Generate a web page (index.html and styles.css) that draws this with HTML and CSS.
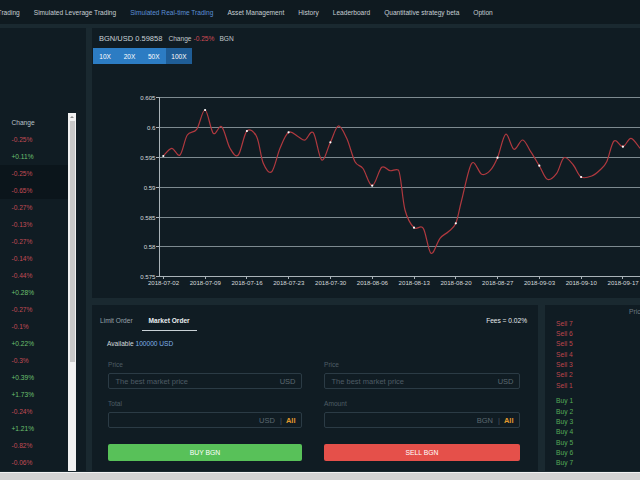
FILE: index.html
```html
<!DOCTYPE html>
<html lang="en">
<head>
<meta charset="utf-8">
<title>Simulated Real-time Trading</title>
<link rel="stylesheet" href="styles.css">
</head>
<body>
<nav class="topnav">
  <span class="nav-item first">Trading</span>
  <span class="nav-item">Simulated Leverage Trading</span>
  <span class="nav-item active">Simulated Real-time Trading</span>
  <span class="nav-item">Asset Management</span>
  <span class="nav-item">History</span>
  <span class="nav-item">Leaderboard</span>
  <span class="nav-item">Quantitative strategy beta</span>
  <span class="nav-item">Option</span>
</nav>
<div class="main">
  <aside class="market">
    <div class="market-list">
      <div class="market-head">Change</div>
      <div class="mrow down">-0.25%</div>
      <div class="mrow up">+0.11%</div>
      <div class="mrow down hl">-0.25%</div>
      <div class="mrow down hl">-0.65%</div>
      <div class="mrow down">-0.27%</div>
      <div class="mrow down">-0.13%</div>
      <div class="mrow down">-0.27%</div>
      <div class="mrow down">-0.14%</div>
      <div class="mrow down">-0.44%</div>
      <div class="mrow up">+0.28%</div>
      <div class="mrow down">-0.27%</div>
      <div class="mrow down">-0.1%</div>
      <div class="mrow up">+0.22%</div>
      <div class="mrow down">-0.3%</div>
      <div class="mrow up">+0.39%</div>
      <div class="mrow up">+1.73%</div>
      <div class="mrow down">-0.24%</div>
      <div class="mrow up">+1.21%</div>
      <div class="mrow down">-0.82%</div>
      <div class="mrow down">-0.06%</div>
    </div>
    <div class="vscroll">
      <div class="vs-arrow"></div>
      <div class="vs-thumb"></div>
    </div>
  </aside>
  <div class="workspace">
    <section class="chart-panel">
      <div class="chart-head">
        <span class="pair">BGN/USD 0.59858</span>
        <span class="ch-label">Change</span>
        <span class="ch-value">-0.25%</span>
        <span class="ch-unit">BGN</span>
      </div>
      <div class="lev-group">
        <span class="lev">10X</span>
        <span class="lev">20X</span>
        <span class="lev">50X</span>
        <span class="lev active">100X</span>
      </div>
      <svg class="chart" width="548" height="226" viewBox="92 70 548 226" xmlns="http://www.w3.org/2000/svg">
        <g stroke="#7d8a90" stroke-width="1">
          <line x1="159" y1="97.5" x2="640" y2="97.5"/>
          <line x1="159" y1="127.5" x2="640" y2="127.5"/>
          <line x1="159" y1="157.5" x2="640" y2="157.5"/>
          <line x1="159" y1="187.5" x2="640" y2="187.5"/>
          <line x1="159" y1="217.5" x2="640" y2="217.5"/>
          <line x1="159" y1="246.5" x2="640" y2="246.5"/>
        </g>
        <g stroke="#aab3b8" stroke-width="1">
          <line x1="159.5" y1="97" x2="159.5" y2="277"/>
          <line x1="159" y1="276.5" x2="640" y2="276.5"/>
          <line x1="156" y1="97.5" x2="159" y2="97.5"/>
          <line x1="156" y1="127.5" x2="159" y2="127.5"/>
          <line x1="156" y1="157.5" x2="159" y2="157.5"/>
          <line x1="156" y1="187.5" x2="159" y2="187.5"/>
          <line x1="156" y1="217.5" x2="159" y2="217.5"/>
          <line x1="156" y1="246.5" x2="159" y2="246.5"/>
          <line x1="156" y1="276.5" x2="159" y2="276.5"/>
          <line x1="163.5" y1="276" x2="163.5" y2="279"/>
          <line x1="205.5" y1="276" x2="205.5" y2="279"/>
          <line x1="246.5" y1="276" x2="246.5" y2="279"/>
          <line x1="288.5" y1="276" x2="288.5" y2="279"/>
          <line x1="330.5" y1="276" x2="330.5" y2="279"/>
          <line x1="372.5" y1="276" x2="372.5" y2="279"/>
          <line x1="414.5" y1="276" x2="414.5" y2="279"/>
          <line x1="455.5" y1="276" x2="455.5" y2="279"/>
          <line x1="497.5" y1="276" x2="497.5" y2="279"/>
          <line x1="539.5" y1="276" x2="539.5" y2="279"/>
          <line x1="581.5" y1="276" x2="581.5" y2="279"/>
          <line x1="622.5" y1="276" x2="622.5" y2="279"/>
        </g>
        <g class="ylab" text-anchor="end">
          <text x="155.5" y="99.5">0.605</text>
          <text x="155.5" y="129.5">0.6</text>
          <text x="155.5" y="159.5">0.595</text>
          <text x="155.5" y="189.5">0.59</text>
          <text x="155.5" y="219.5">0.585</text>
          <text x="155.5" y="248.8">0.58</text>
          <text x="155.5" y="278.5">0.575</text>
        </g>
        <g class="xlab" text-anchor="middle">
          <text x="163.5" y="285">2018-07-02</text>
          <text x="205.3" y="285">2018-07-09</text>
          <text x="247" y="285">2018-07-16</text>
          <text x="288.8" y="285">2018-07-23</text>
          <text x="330.6" y="285">2018-07-30</text>
          <text x="372.4" y="285">2018-08-06</text>
          <text x="414.2" y="285">2018-08-13</text>
          <text x="456" y="285">2018-08-20</text>
          <text x="497.7" y="285">2018-08-27</text>
          <text x="539.5" y="285">2018-09-03</text>
          <text x="581.3" y="285">2018-09-10</text>
          <text x="623.1" y="285">2018-09-17</text>
        </g>
        <path fill="none" stroke="#b0393f" stroke-width="1.2" stroke-linejoin="round"
          d="M163.3,156 C164.7,154.7 168.9,148.5 171.7,148.3
             S177.4,157.2 180,155 S184.5,139.3 187.3,135 S193.7,133.5 196.7,129.3
             S202.3,109.3 205.1,110 S210.5,130.5 213.3,133.3 S218.9,124.2 221.7,126.7
             S227.2,143.6 230,148.3 S235.5,157.9 238.3,155 S243.8,134.1 246.9,131
             S254,131.3 256.7,136.7 S260.8,157.5 263.3,163.3 S268.9,174.2 271.7,171.7
             S277.2,154.9 280,148.3 S285.6,134.2 288.6,132.3 S295.6,135.4 298.3,136.7
             S302.5,140.7 305,140 S310.5,129.4 313.3,132.7 S318.9,158.4 321.7,160
             S327.6,148 330.4,142.3 S335.6,126.7 338.3,126 S343.9,132.4 346.7,138.3
             S352.3,156.7 355,161.7 S360.1,164.5 363,168.5 S369.1,185.9 372.2,185.7
             S378.7,169.8 381.7,167.3 S387.2,170.3 390,170.7 S395.8,168.5 398.3,170
             S402.4,200.4 405,210 S411,224.7 414,227.7 S420.5,224 423.3,228.3
             S428.2,251.6 431,253.3 S437.1,241.9 440,238.3 S445.7,234.2 448.3,231.7
             S453.6,228.6 455.8,223.3 S459,210 461.7,200 S468.4,167.6 471.7,163.3
             S478.6,173.1 481.7,174.3 S487.4,173.5 490,170.7 S494.9,163.8 497.5,157.7
             S503,135.7 505.7,134.3 S511.2,148.4 514,149.3 S519.9,139.6 522.7,140
             S527.9,147.4 530.7,151.7 S536.5,161.1 539.3,165.7 S544.4,178 547.3,179.3
             S553.9,176.9 556.7,173.3 S561.2,159.1 564,157.7 S570.5,161.8 573.3,165
             S578,175.2 581.1,177 S588.6,177.2 591.7,176 S597.5,172.4 600,170
             S604.4,166.5 606.7,161.7 S611.3,143.5 614,141 S620.1,147.2 622.9,146.7
             S628.2,138 631,138.3 S638.5,146.6 640,148.3"/>
        <g fill="#ffffff">
          <circle cx="163.3" cy="156" r="1.1"/>
          <circle cx="205.1" cy="110" r="1.1"/>
          <circle cx="246.9" cy="131" r="1.1"/>
          <circle cx="288.6" cy="132.3" r="1.1"/>
          <circle cx="330.4" cy="142.3" r="1.1"/>
          <circle cx="372.2" cy="185.7" r="1.1"/>
          <circle cx="414" cy="227.7" r="1.1"/>
          <circle cx="455.8" cy="223.3" r="1.1"/>
          <circle cx="497.5" cy="157.7" r="1.1"/>
          <circle cx="539.3" cy="165.7" r="1.1"/>
          <circle cx="581.1" cy="177" r="1.1"/>
          <circle cx="622.9" cy="146.7" r="1.1"/>
        </g>
      </svg>
    </section>
    <div class="bottom-row">
      <section class="order-panel">
        <div class="order-tabs">
          <span class="tab">Limit Order</span>
          <span class="tab active">Market Order</span>
          <span class="fees">Fees = 0.02%</span>
        </div>
        <div class="avail">Available <span class="avail-val">100000 USD</span></div>
        <div class="order-form">
          <div class="order-col">
            <div class="f-label">Price</div>
            <div class="f-input"><span class="ph">The best market price</span><span class="unit">USD</span></div>
            <div class="f-label second">Total</div>
            <div class="f-input"><span class="ph"></span><span class="unit">USD</span><span class="sep">|</span><span class="all">All</span></div>
            <div class="btn buy">BUY BGN</div>
          </div>
          <div class="order-col">
            <div class="f-label">Price</div>
            <div class="f-input"><span class="ph">The best market price</span><span class="unit">USD</span></div>
            <div class="f-label second">Amount</div>
            <div class="f-input"><span class="ph"></span><span class="unit">BGN</span><span class="sep">|</span><span class="all">All</span></div>
            <div class="btn sell">SELL BGN</div>
          </div>
        </div>
      </section>
      <section class="book-panel">
        <div class="book-head">Price</div>
        <div class="book-group sells">
          <div class="brow">Sell 7</div>
          <div class="brow">Sell 6</div>
          <div class="brow">Sell 5</div>
          <div class="brow">Sell 4</div>
          <div class="brow">Sell 3</div>
          <div class="brow">Sell 2</div>
          <div class="brow">Sell 1</div>
        </div>
        <div class="book-group buys">
          <div class="brow">Buy 1</div>
          <div class="brow">Buy 2</div>
          <div class="brow">Buy 3</div>
          <div class="brow">Buy 4</div>
          <div class="brow">Buy 5</div>
          <div class="brow">Buy 6</div>
          <div class="brow">Buy 7</div>
        </div>
      </section>
    </div>
  </div>
</div>
<div class="hscroll"></div>
</body>
</html>
```

FILE: styles.css
```css
html, body {
  margin: 0;
  padding: 0;
  width: 640px;
  height: 480px;
  overflow: hidden;
}

body {
  background: #1a2930;
  font-family: "Liberation Sans", Arial, sans-serif;
  color: #c9d1d6;
}

/* top navigation */
.topnav {
  height: 24px;
  background: #0f1a20;
  display: flex;
  align-items: center;
  gap: 14px;
  font-size: 6.6px;
  white-space: nowrap;
  overflow: hidden;
}

.nav-item {
  color: #c6ced3;
}

.nav-item.first {
  margin-left: -2.4px;
}

.nav-item.active {
  color: #5b8fd6;
}

/* main area */
.main {
  margin-top: 4px;
  height: 443px;
  display: grid;
  grid-template-columns: 86px 548px;
  column-gap: 6px;
}

/* left market list */
.market {
  background: #101c23;
  display: flex;
  overflow: hidden;
}

.market-list {
  width: 68px;
  padding-top: 86px;
  font-size: 6.6px;
}

.market-head {
  height: 17px;
  line-height: 17px;
  padding-left: 11.5px;
  color: #b8c3ca;
}

.mrow {
  height: 17px;
  line-height: 17px;
  padding-left: 11.5px;
}

.mrow.hl {
  background: #0b151b;
}

.down {
  color: #c24b55;
}

.up {
  color: #6cc070;
}

.vscroll {
  width: 8px;
  margin-top: 85px;
  background: #f1f1f1;
  display: flex;
  flex-direction: column;
  align-items: center;
}

.vs-arrow {
  width: 0;
  height: 0;
  margin-top: 3px;
  border-left: 2px solid transparent;
  border-right: 2px solid transparent;
  border-bottom: 2px solid #8a8a8a;
}

.vs-thumb {
  width: 5px;
  height: 241px;
  margin-top: 3px;
  background: #c8c8c8;
}

/* workspace */
.workspace {
  display: grid;
  grid-template-rows: 270px 166px;
  row-gap: 7px;
}

.chart-panel {
  background: #101c23;
  overflow: hidden;
}

.chart-head {
  height: 20px;
  display: flex;
  align-items: center;
  padding-left: 7px;
  white-space: nowrap;
}

.pair {
  font-size: 7.5px;
  color: #c9d1d6;
}

.ch-label {
  font-size: 6.6px;
  margin-left: 6px;
  color: #c0c8cd;
}

.ch-value {
  font-size: 6.6px;
  margin-left: 2px;
  color: #d04a55;
}

.ch-unit {
  font-size: 6.6px;
  margin-left: 5px;
  color: #c0c8cd;
}

.lev-group {
  display: flex;
  margin-left: 1px;
}

.lev {
  width: 24.3px;
  height: 16px;
  background: #2c7cc3;
  color: #ffffff;
  font-size: 6.5px;
  display: flex;
  align-items: center;
  justify-content: center;
}

.lev.active {
  width: 26px;
  background: #1f5d96;
}

.chart {
  display: block;
  margin-top: 6px;
}

.ylab text,
.xlab text {
  font-family: "Liberation Sans", Arial, sans-serif;
  font-size: 6.1px;
  fill: #d5dadd;
}

/* bottom row */
.bottom-row {
  display: grid;
  grid-template-columns: 446px 95px;
  column-gap: 7px;
}

.order-panel {
  background: #101c23;
  padding: 0 18px 0 16px;
  font-size: 6.6px;
}

.order-tabs {
  height: 26px;
  display: flex;
  align-items: flex-end;
  gap: 2px;
  margin-left: -15px;
  margin-right: -7px;
}

.tab {
  line-height: 10px;
  padding: 6px 7px 4px;
  border-bottom: 1px solid transparent;
  color: #98a4ab;
}

.tab.active {
  color: #e8edf0;
  font-weight: bold;
  border-bottom-color: #c9d1d6;
}

.fees {
  margin-left: auto;
  line-height: 10px;
  padding: 6px 0 5px;
  color: #e6ebee;
}

.avail {
  margin-top: 8px;
  margin-left: -1px;
  line-height: 10px;
  color: #d3dade;
}

.avail-val {
  color: #7fb2ea;
}

.order-form {
  display: grid;
  grid-template-columns: 194px 196px;
  column-gap: 22px;
  margin-top: 11px;
}

.f-label {
  line-height: 10px;
  color: #4e5c65;
  margin-bottom: 3px;
}

.f-label.second {
  margin-top: 10px;
}

.f-input {
  height: 16px;
  box-sizing: border-box;
  border: 1px solid #2b3b45;
  border-radius: 2px;
  display: flex;
  align-items: center;
  padding: 0 5.5px 0 6.5px;
  font-size: 7.5px;
  white-space: nowrap;
}

.ph {
  flex: 1;
  color: #4e5b64;
}

.unit {
  color: #5b6870;
}

.sep {
  color: #4a5760;
  margin: 0 4px 0 5px;
}

.all {
  color: #e39a2d;
  font-weight: bold;
}

.btn {
  margin-top: 16px;
  height: 17px;
  border-radius: 2px;
  color: #ffffff;
  font-size: 6.8px;
  display: flex;
  align-items: center;
  justify-content: center;
}

.btn.buy {
  background: #58c159;
}

.btn.sell {
  background: #e5504a;
}

/* order book */
.book-panel {
  background: #101c23;
  overflow: hidden;
  font-size: 6.7px;
  white-space: nowrap;
}

.book-head {
  height: 13.5px;
  line-height: 14px;
  padding-left: 84px;
  color: #6c7a82;
}

.book-group {
  padding-left: 11px;
}

.brow {
  height: 10.35px;
  line-height: 10.35px;
}

.sells .brow {
  color: #bd454c;
}

.buys {
  margin-top: 5.4px;
}

.buys .brow {
  color: #55ab58;
}

/* horizontal scrollbar */
.hscroll {
  height: 8px;
  margin-top: 1px;
  border-top: 1px solid #f2f2f2;
  background: #d4d4d4;
}
```
